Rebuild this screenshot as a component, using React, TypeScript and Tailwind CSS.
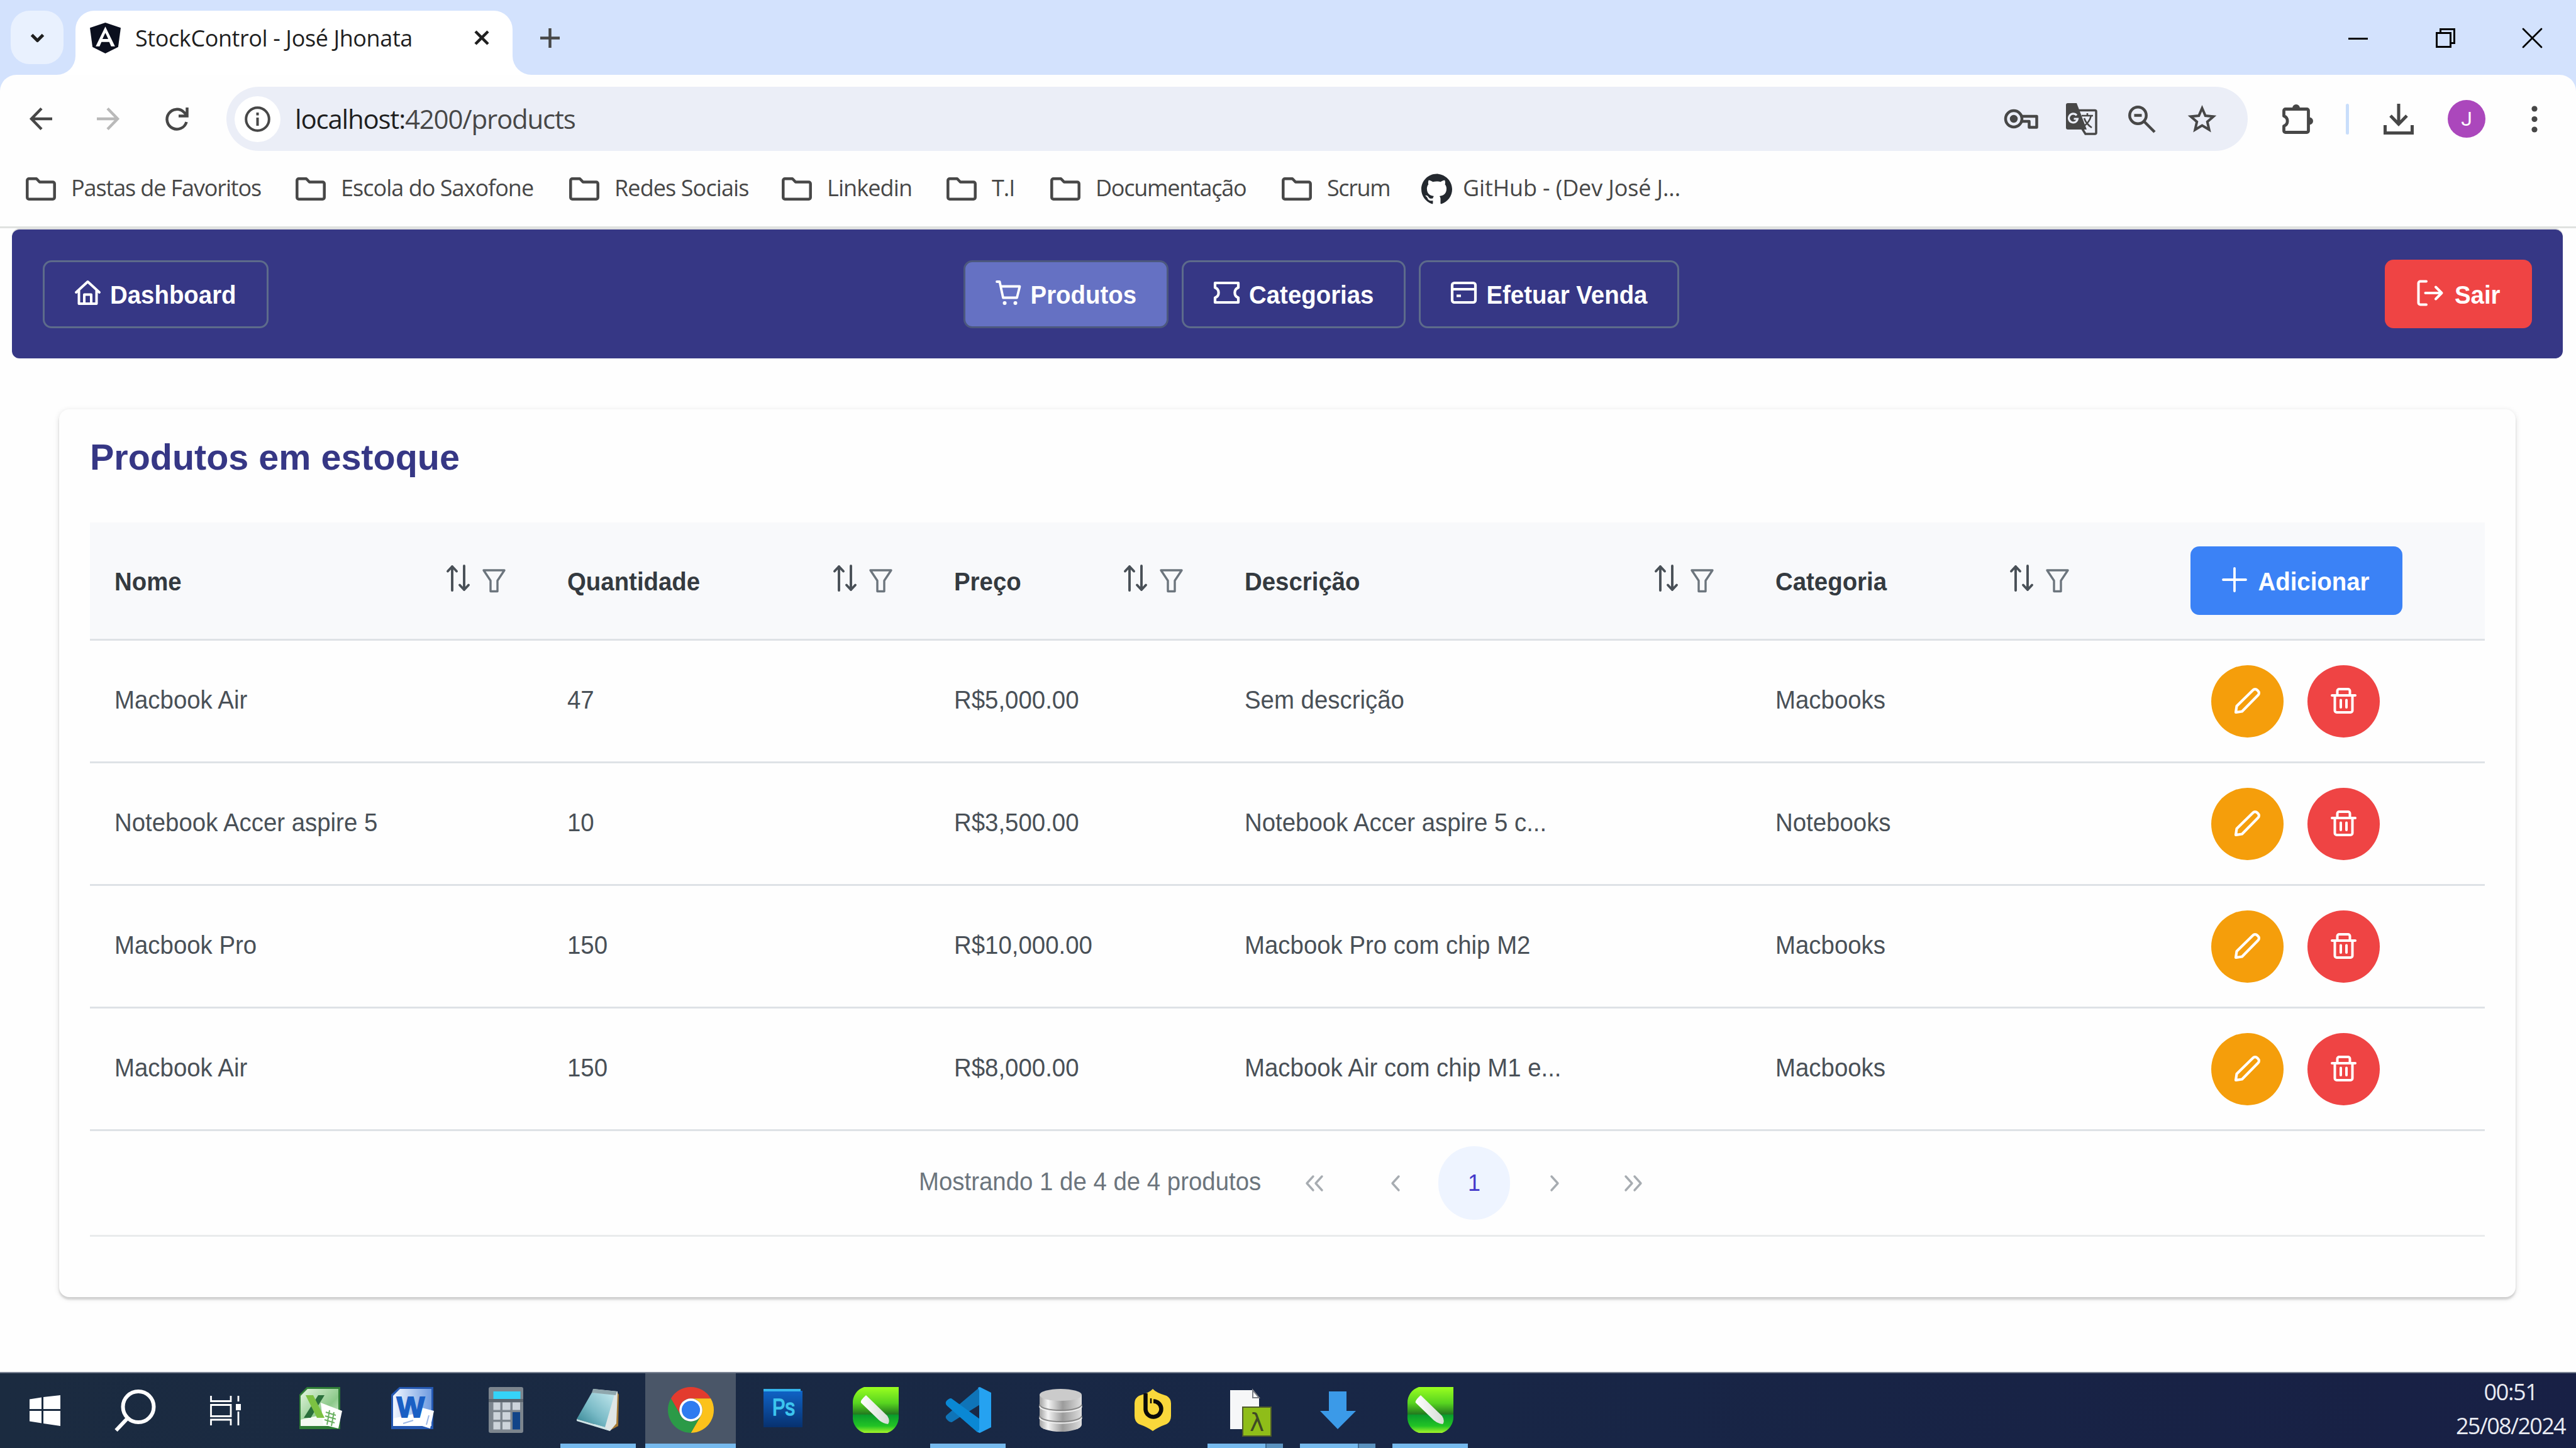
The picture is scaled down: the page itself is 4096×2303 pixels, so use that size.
import type { ReactNode } from 'react';
import { SiGithub } from 'react-icons/si';

type IconProps = { className: string; box: string; width?: number; children: ReactNode };

function Line({ className, box, width = 4, children }: IconProps) {
  return (
    <svg className={'shrink-0 overflow-visible ' + className} viewBox={box} fill="none" stroke="currentColor" strokeWidth={width} strokeLinejoin="round" strokeLinecap="round">
      {children}
    </svg>
  );
}

function Art({ className, box, children }: IconProps) {
  return (
    <svg className={'shrink-0 overflow-visible ' + className} viewBox={box}>
      {children}
    </svg>
  );
}

/* ---------- Browser ---------- */

function TabStrip() {
  return (
    <div className="flex h-[119px] items-start pt-[17px]">
      <div className="ml-[17px] flex h-[85px] w-[84px] items-center justify-center rounded-[30px] bg-[#e9f1fe] text-[#1f1f1f]">
        <Line className="h-[14px] w-[23px]" box="0 0 23 14" width={5}><path d="M2.500 2.500L11.500 11.500L20.500 2.500" strokeLinecap="butt" /></Line>
      </div>
      <div className="relative ml-[19px] flex h-[102px] w-[695px] rounded-t-[30px] bg-white pl-[23px]">
        <svg className="absolute bottom-0 -left-[30px] h-[30px] w-[30px]" viewBox="0 0 30 30"><path d="M30 0V30H0A30 30 0 0 0 30 0Z" fill="#fff" /></svg>
        <svg className="absolute -right-[30px] bottom-0 h-[30px] w-[30px]" viewBox="0 0 30 30"><path d="M0 0V30H30A30 30 0 0 1 0 0Z" fill="#fff" /></svg>
        <div className="flex h-[86px] flex-1 items-center">
          <Art className="h-[49px] w-[49px]" box="0 0 48 48">
            <path d="M24 0L48 8L44 38L24 48L4 38L0 8Z" fill="#0b0f1e" />
            <path fillRule="evenodd" d="M24 6L39 37H33L30 30H18L15 37H9ZM24 16L28.500 25.500H19.500Z" fill="#fff" />
          </Art>
          <span className="ml-[23px] w-[539px] whitespace-nowrap pt-[2px] text-[36px] leading-[48px] tracking-[-0.4px] text-[#1f1f1f]">StockControl - José Jhonata</span>
          <Line className="h-[24px] w-[24px] text-[#1f1f1f]" box="0 0 24 24" width={4.5}><path d="M2 2L22 22M22 2L2 22" strokeLinecap="butt" /></Line>
        </div>
      </div>
      <div className="ml-[44px] flex h-[86px] items-center text-[#474747]">
        <Line className="h-[31px] w-[31px]" box="0 0 31 31" width={4.5}><path d="M15.500 0V31M0 15.500H31" strokeLinecap="butt" /></Line>
      </div>
      <div className="mr-[54px] ml-auto flex h-[86px] items-center text-black">
        <div className="mt-[2px] h-[3px] w-[31px] bg-black" />
        <Line className="ml-[108px] h-[31px] w-[31px]" box="0 0 31 31" width={3}><path strokeLinejoin="miter" d="M1.500 7.500H23.500V29.500H1.500ZM7.500 7V1.500H29.500V23.500H24" /></Line>
        <Line className="ml-[107px] h-[31px] w-[31px]" box="0 0 31 31" width={2.8}><path d="M1 1L30 30M30 1L1 30" /></Line>
      </div>
    </div>
  );
}

function Toolbar() {
  return (
    <div className="flex h-[121px] items-center pt-[19px] text-[#474747]">
      <Line className="ml-[47px] h-[36px] w-[36px]" box="0 0 36 36" width={4.5}><path strokeLinecap="butt" strokeLinejoin="miter" d="M36 18H4M19 1.500L3 18L19 34.500" /></Line>
      <Line className="ml-[71px] h-[36px] w-[36px] text-[#b9b9b9]" box="0 0 36 36" width={4.5}><path strokeLinecap="butt" strokeLinejoin="miter" d="M0 18H32M17 1.500L33 18L17 34.500" /></Line>
      <Line className="ml-[73px] h-[36px] w-[37px]" box="0 0 37 36" width={4.5}><path strokeLinecap="butt" strokeLinejoin="miter" d="M33.500 23A15.800 15.800 0 1 1 29.500 7.500L34 12M34.500 0V13.500H21" /></Line>
      <div className="ml-[60px] flex h-[102px] w-[3214px] items-center rounded-full bg-[#ebeef7] pl-[13px]">
        <div className="flex h-[73px] w-[73px] items-center justify-center rounded-full bg-white">
          <Line className="h-[41px] w-[41px]" box="0 0 41 41" width={4}><circle cx="20.500" cy="20.500" r="18.300" /><path strokeLinecap="butt" d="M20.500 18V31M20.500 10V14.500" /></Line>
        </div>
        <span className="ml-[23px] whitespace-nowrap text-[42px] leading-[60px] tracking-[-1.2px] text-[#474747]"><span className="text-[#1f1f1f]">localhost:</span>4200/products</span>
        <Line className="ml-auto h-[32px] w-[54px]" box="0 0 54 32" width={4.5}>
          <circle cx="15" cy="16" r="13" /><circle cx="15" cy="16" r="4" fill="currentColor" />
          <path d="M27.500 12H51.500V29.500H39.500V20H27.500" />
        </Line>
        <Art className="ml-[44px] h-[51px] w-[50px]" box="0 0 50 51">
          <path d="M3 0H17L33 42H3A3 3 0 0 1 0 39V3A3 3 0 0 1 3 0Z" fill="#474747" />
          <path d="M19.500 11.500H46A2 2 0 0 1 48 13.500V47A2 2 0 0 1 46 49H31L26 41" fill="none" stroke="#474747" strokeWidth="3.500" />
          <path d="M17 19.500A7 7 0 1 0 18.500 25H12.500" fill="none" stroke="#ebeef7" strokeWidth="3.200" />
          <path d="M25 20H43M34 16V20M40 20C38 28 34 33 28 37M29 24C31 30 35 35 41 39" fill="none" stroke="#474747" strokeWidth="2.600" />
        </Art>
        <Line className="ml-[49px] h-[43px] w-[43px]" box="0 0 43 43" width={4.5}><circle cx="15.500" cy="15.500" r="13.200" /><path strokeLinecap="butt" d="M25 25L42 42M9.500 15.500H21.500" /></Line>
        <Line className="mr-[50px] ml-[52px] h-[44px] w-[45px]" box="0 0 45 44" width={4}><path strokeLinejoin="miter" d="M22.500 5L27.700 17L40.500 18.200L30.800 26.700L33.700 39.300L22.500 32.600L11.300 39.300L14.200 26.700L4.500 18.200L17.300 17Z" /></Line>
      </div>
      <Line className="ml-[55px] h-[49px] w-[49px]" box="0 0 49 49" width={4.8}>
        <path d="M5 8.500H39A2.500 2.500 0 0 1 41.500 11V43A2.500 2.500 0 0 1 39 45.500H5A2.500 2.500 0 0 1 2.500 43V35.500A8.500 8.500 0 0 0 2.500 19.500V11A2.500 2.500 0 0 1 5 8.500Z" />
        <path d="M16 7A6 6 0 0 1 28 7ZM43 21.500A6 6 0 0 1 43 33.500Z" fill="currentColor" stroke="none" />
      </Line>
      <div className="ml-[52px] h-[49px] w-[5px] rounded-full bg-[#c9defb]" />
      <Line className="ml-[55px] h-[49px] w-[48px]" box="0 0 48 49" width={5}><path strokeLinecap="butt" strokeLinejoin="miter" d="M24 0V32M11 19L24 32.500L37 19M2.500 34V46.500H45.500V34" /></Line>
      <div className="ml-[54px] flex h-[60px] w-[60px] items-center justify-center rounded-full bg-[#ab47bc] font-[Roboto] text-[32px] leading-[60px] text-white">J</div>
      <Art className="ml-[73px] h-[43px] w-[10px]" box="0 0 10 43"><circle cx="5" cy="5" r="4.600" fill="#474747" /><circle cx="5" cy="21.500" r="4.600" fill="#474747" /><circle cx="5" cy="38" r="4.600" fill="#474747" /></Art>
    </div>
  );
}

const folders = [
  { name: 'Pastas de Favoritos', cls: 'w-[429px] tracking-[-1.12px]' },
  { name: 'Escola do Saxofone', cls: 'w-[435px] tracking-[-0.98px]' },
  { name: 'Redes Sociais', cls: 'w-[338px] tracking-[-0.9px]' },
  { name: 'Linkedin', cls: 'w-[262px] tracking-[-0.9px]' },
  { name: 'T.I', cls: 'w-[165px] tracking-[-1px]' },
  { name: 'Documentação', cls: 'w-[368px] tracking-[-1.25px]' },
  { name: 'Scrum', cls: 'w-[222px] tracking-[-1.4px]' },
];

function Bookmarks() {
  return (
    <div className="flex h-[120px] items-center pl-[41px] text-[#474747]">
      {folders.map((f) => (
        <div key={f.name} className={'flex shrink-0 items-center whitespace-nowrap text-[36px] leading-[48px] ' + f.cls}>
          <Line className="h-[37px] w-[48px]" box="0 0 48 37" width={4.5}><path d="M5 2.300H17L22 7.500H43A2.700 2.700 0 0 1 45.700 10.200V32A2.700 2.700 0 0 1 43 34.700H5A2.700 2.700 0 0 1 2.300 32V5A2.700 2.700 0 0 1 5 2.300Z" /></Line>
          <span className="ml-[24px] pb-[3px]">{f.name}</span>
        </div>
      ))}
      <SiGithub className="h-[49px] w-[49px] shrink-0 text-[#24292f]" />
      <span className="ml-[17px] whitespace-nowrap pb-[3px] text-[36px] leading-[48px] tracking-[-0.15px]">GitHub - (Dev José J...</span>
    </div>
  );
}

/* ---------- Application ---------- */

function NavButton({ icon, label, active }: { icon: ReactNode; label: string; active?: boolean }) {
  return (
    <div className={'flex h-[108px] items-center gap-[15px] rounded-[14px] border-[3px] px-[48px] ' + (active ? 'border-[#4c587e] bg-[#6571c3]' : 'border-[#5d6b8b]')}>
      {icon}
      <span className="scale-y-107 pt-[2px]">{label}</span>
    </div>
  );
}

function Nav() {
  return (
    <div className="mr-[21px] ml-[19px] mt-[2px] flex h-[205px] items-center rounded-[12px] bg-[#363785] pr-[49px] pl-[49px] text-[38.4px] leading-[48px] font-bold whitespace-nowrap text-white shadow-[0_-2px_0_#dfe0e0]">
      <NavButton label="Dashboard" icon={
        <Line className="-mt-[5px] h-[41px] w-[41px]" box="0 0 41 41" width={4}><path d="M2 20L20.500 3L39 20M6.500 17V38H34.500V17M15 38V23.500H26V38" /></Line>
      } />
      <div className="ml-[1105px] flex gap-[21px]">
        <NavButton active label="Produtos" icon={
          <Line className="-mt-[3px] h-[41px] w-[41px]" box="0 0 41 41" width={3.8}><path d="M2 2H6.500L12 27.500H34L38.500 9.500H8.500" /><circle cx="14.500" cy="36" r="3" fill="currentColor" stroke="none" /><circle cx="31.500" cy="36" r="3" fill="currentColor" stroke="none" /></Line>
        } />
        <NavButton label="Categorias" icon={
          <Line className="-mt-[5px] h-[35px] w-[41px]" box="0 0 41 35" width={4.2}><path d="M2 2H39V9.500A8.500 8.500 0 0 0 39 25.500V33H2V25.500A8.500 8.500 0 0 0 2 9.500Z" /></Line>
        } />
        <NavButton label="Efetuar Venda" icon={
          <Line className="-mt-[5px] h-[35px] w-[41px]" box="0 0 41 35" width={4.2}><rect x="2" y="2" width="37" height="31" rx="3.500" /><path strokeLinecap="butt" d="M2 12H39M9 22.500H16" /></Line>
        } />
      </div>
      <div className="ml-auto flex h-[109px] w-[234px] items-center rounded-[14px] bg-[#ef4444] pl-[51px]">
        <Line className="-mt-[4px] h-[42px] w-[42px]" box="0 0 42 42" width={4}><path d="M15 2.500H5.500A3 3 0 0 0 2.500 5.500V36.500A3 3 0 0 0 5.500 39.500H15M13.500 21H39.500M30 11.500L39.500 21L30 30.500" /></Line>
        <span className="ml-[18px] scale-y-107 pt-[2px]">Sair</span>
      </div>
    </div>
  );
}

const grid = 'grid grid-cols-[720px_615px_462px_844px_565px_602px]';
const columns = ['Nome', 'Quantidade', 'Preço', 'Descrição', 'Categoria'];

const products = [
  ['Macbook Air', '47', 'R$5,000.00', 'Sem descrição', 'Macbooks'],
  ['Notebook Accer aspire 5', '10', 'R$3,500.00', 'Notebook Accer aspire 5 c...', 'Notebooks'],
  ['Macbook Pro', '150', 'R$10,000.00', 'Macbook Pro com chip M2', 'Macbooks'],
  ['Macbook Air', '150', 'R$8,000.00', 'Macbook Air com chip M1 e...', 'Macbooks'],
];

function Products() {
  return (
    <div className="mt-[81px] ml-[94px] h-[1412px] w-[3906px] rounded-[16px] bg-[#fefefe] px-[49px] pt-[46px] text-[38.4px] leading-[48px] whitespace-nowrap shadow-[0_4px_3px_0_rgba(0,0,0,0.12),0_2px_10px_0_rgba(0,0,0,0.13)]">
      <h1 className="text-[57.5px] leading-[60px] font-bold text-[#363785]">Produtos em estoque</h1>
      <div className={grid + ' mt-[74px] h-[188px] border-b-[3px] border-[#dee2e6] bg-[#f8f9fb] font-bold text-[#343a40]'}>
        {columns.map((c) => (
          <div key={c} className="flex items-center pr-[59px] pl-[39px]">
            <span className="scale-y-107 pt-[2px]">{c}</span>
            <Line className="mb-[9px] ml-auto h-[41px] w-[37px] text-[#495057]" box="0 0 37 41" width={3.9}><path d="M9 40V2M2 9.500L9 2L16 9.500M28 1V39M21 31.500L28 39L35 31.500" /></Line>
            <Line className="ml-[20px] h-[37px] w-[37px] text-[#6c757d]" box="0 0 37 37" width={3.4}><path d="M2 2H35L24 18.500V35.500H13V18.500Z" /></Line>
          </div>
        ))}
        <div className="flex items-center justify-center">
          <div className="ml-[2px] flex h-[109px] w-[337px] items-center rounded-[14px] bg-[#3b82f6] pl-[50px] text-white">
            <Line className="-mt-[3px] h-[40px] w-[40px]" box="0 0 40 40" width={3.8}><path d="M20 2V38M2 20H38" /></Line>
            <span className="ml-[18px] scale-y-107 pt-[2px]">Adicionar</span>
          </div>
        </div>
      </div>
      {products.map((p, i) => (
        <div key={i} className={grid + ' h-[195px] border-b-[3px] border-[#dee2e6] text-[#495057]'}>
          {p.map((v, j) => <div key={j} className="flex items-center pl-[39px]"><span className="scale-y-107 pb-[4px]">{v}</span></div>)}
          <div className="flex items-center justify-center gap-[38px] text-white">
            <div className="flex h-[115px] w-[115px] items-center justify-center rounded-full bg-[#f59e0b]">
              <Line className="-mt-[2px] h-[41px] w-[41px]" box="0 0 41 41" width={4.2}><path d="M2 39L3.500 29L29.500 3.500A4.500 4.500 0 0 1 36 3.500L37.500 5A4.500 4.500 0 0 1 37.500 11.500L12 37.500Z" /></Line>
            </div>
            <div className="flex h-[115px] w-[115px] items-center justify-center rounded-full bg-[#ef4444]">
              <Line className="-mt-[2px] h-[41px] w-[41px]" box="0 0 41 41" width={4}><path d="M2 12H39M6.500 12V36A3 3 0 0 0 9.500 39H31.500A3 3 0 0 0 34.500 36V12M10.500 12V5A3 3 0 0 1 13.500 2H27.500A3 3 0 0 1 30.500 5V12M16 19.500V31M25 19.500V31" /></Line>
            </div>
          </div>
        </div>
      ))}
      <div className="flex h-[168px] items-center border-b-[3px] border-[#e9ebec] pl-[1318px] text-[#a7acb1]">
        <span className="-mt-[5px] w-[614px] scale-y-107 text-[#6c757d]">Mostrando 1 de 4 de 4 produtos</span>
        <Line className="h-[26px] w-[30px]" box="0 0 30 26" width={3.4}><path d="M13 2L3 13L13 24M27 2L17 13L27 24" /></Line>
        <Line className="ml-[106px] h-[26px] w-[17px]" box="0 0 17 26" width={3.4}><path d="M13 2L3 13L13 24" /></Line>
        <div className="ml-[59px] h-[117px] w-[114px] rounded-full bg-[#eef4ff] text-center text-[36px] leading-[117px] text-[#4338ca]">1</div>
        <Line className="ml-[62px] h-[26px] w-[17px]" box="0 0 17 26" width={3.4}><path d="M4 2L14 13L4 24" /></Line>
        <Line className="ml-[102px] h-[26px] w-[30px]" box="0 0 30 26" width={3.4}><path d="M3 2L13 13L3 24M17 2L27 13L17 24" /></Line>
      </div>
    </div>
  );
}

/* ---------- Taskbar ---------- */

const B = '0 0 73 73';
const S = 'h-[73px] w-[73px]';

function Excel() {
  return (
    <Art className={S} box={B}>
      <defs><linearGradient id="xl" x1="0" y1="0" x2="1" y2="1"><stop offset="0" stopColor="#e4f5df" /><stop offset="0.6" stopColor="#8cc98a" /><stop offset="1" stopColor="#e9f5e6" /></linearGradient></defs>
      <path d="M14 0H67V67H2V12Z" fill="#2f7d36" /><path d="M15 3H64V62H4V14Z" fill="url(#xl)" />
      <path d="M4 52L30 46L64 40V62H4Z" fill="#f4faf2" />
      <path d="M36 25L70 38L64 66L40 60Z" fill="#fff" /><path d="M44 40L60 45M43 46L60 51M42 52L58 57M50 37L46 60M57 40L53 62" stroke="#69b061" strokeWidth="2" />
      <path d="M32 13H42L20 49H9Z" fill="#2a6f3b" /><path d="M12 13H24L42 49H30Z" fill="#7cc142" />
    </Art>
  );
}
function Word() {
  return (
    <Art className={S} box={B}>
      <defs><linearGradient id="wd" x1="0" y1="0" x2="1" y2="0"><stop offset="0" stopColor="#f2f7ff" /><stop offset="1" stopColor="#6f9be0" /></linearGradient></defs>
      <path d="M14 0H68V67H1V12Z" fill="#2457b0" /><path d="M15 3H65V62H4V14Z" fill="url(#wd)" /><path d="M4 50L50 40L65 46V62H4Z" fill="#fff" />
      <path d="M50 33L69 38L63 66L44 60Z" fill="#fff" /><path d="M20 58L36 53M61 45L57 60" stroke="#9db8e6" strokeWidth="2" />
      <text x="32" y="48" textAnchor="middle" fontFamily="Liberation Sans" fontWeight="bold" fontSize="47" fill="#1a5fc4" stroke="#1a5fc4" strokeWidth="2">W</text>
    </Art>
  );
}
function Calculator() {
  return (
    <Art className={S} box={B}>
      <rect x="9" y="0" width="55" height="73" rx="3" fill="#7c858e" /><rect x="9" y="19" width="55" height="5" fill="#5d666f" />
      <rect x="16.500" y="7" width="43" height="12" fill="#35d3f8" />
      <path d="M16.500 24.500h11v12h-11zM31 24.500h12.500v12H31zM47 24.500h12v12H47zM16.500 40h11v12h-11zM31 40h12.500v12H31zM16.500 55.500h11v12h-11zM31 55.500h12.500v12H31z" fill="#cdd4db" />
      <path d="M47 40h12v27.500H47z" fill="#114488" />
    </Art>
  );
}
function Notepad() {
  return (
    <Art className={S} box={B}>
      <defs><linearGradient id="np" x1="0" y1="1" x2="1" y2="0"><stop offset="0" stopColor="#2c7f8e" /><stop offset="0.45" stopColor="#79bac6" /><stop offset="1" stopColor="#c3e8ee" /></linearGradient></defs>
      <path d="M66 8L69 12L68 62L57 68Z" fill="#a47a35" /><path d="M28 3L67 7L65 58L55 70L30 62Z" fill="#dfe6e6" />
      <path d="M26 9L62 12L47 64L2 51Z" fill="url(#np)" /><path d="M28 3L66 7L64 13L26 9Z" fill="#8fa7ad" /><path d="M2 51L47 64L55 70L2 54Z" fill="#cfe4e6" />
    </Art>
  );
}
function Chrome() {
  return (
    <Art className={S} box="0 0 48 48">
      <path d="M24 12H44.800A24 24 0 0 0 3.200 12L13.600 30A12 12 0 0 1 24 12Z" fill="#e33b2e" />
      <path d="M34.400 30L24 48A24 24 0 0 0 44.800 12H24A12 12 0 0 1 34.400 30Z" fill="#fcc21b" />
      <path d="M13.600 30L3.200 12A24 24 0 0 0 24 48L34.400 30A12 12 0 0 1 13.600 30Z" fill="#2b9a47" />
      <circle cx="24" cy="24" r="12" fill="#fff" /><circle cx="24" cy="24" r="9.600" fill="#2f7bf0" />
    </Art>
  );
}
function Photoshop() {
  return (
    <Art className={S} box={B}>
      <defs><linearGradient id="ps" x1="0" y1="0" x2="0" y2="1"><stop offset="0" stopColor="#0f63c6" /><stop offset="1" stopColor="#07316f" /></linearGradient></defs>
      <rect x="5" y="6" width="62" height="58" fill="url(#ps)" /><rect x="5" y="3" width="59" height="4" fill="#35b5ec" />
      <text x="37" y="45" textAnchor="middle" fontFamily="Liberation Sans" fontSize="37" textLength="36" lengthAdjust="spacingAndGlyphs" fill="#3cc5ee" stroke="#3cc5ee" strokeWidth="1.600">Ps</text>
    </Art>
  );
}
function Camtasia() {
  return (
    <Art className={S} box={B}>
      <defs>
        <linearGradient id="ct" x1="0" y1="0" x2="0" y2="1"><stop offset="0" stopColor="#9aff1f" /><stop offset="0.35" stopColor="#58d420" /><stop offset="0.590" stopColor="#237a1e" /><stop offset="0.610" stopColor="#0a9c2c" /><stop offset="0.850" stopColor="#22c425" /><stop offset="1" stopColor="#a6f52a" /></linearGradient>
        <linearGradient id="cp" x1="0" y1="0" x2="1" y2="0"><stop offset="0" stopColor="#fff" /><stop offset="1" stopColor="#d5dcd5" /></linearGradient>
      </defs>
      <path d="M18 0H73V46A27 27 0 0 1 55 73H18A26 26 0 0 1 0 46V26A26 26 0 0 1 18 0Z" fill="url(#ct)" />
      <path d="M21 13L55 46Q60 54 56 59Q48 58 42 53L13 25Q11 22 21 13Z" fill="url(#cp)" />
    </Art>
  );
}
function VsCode() {
  return (
    <Art className={S} box={B}>
      <path d="M55 0V28L12 55Q8 58 2 51Q-1 47 3 44Z" fill="#0f74b8" />
      <path d="M55 73V51L11 19Q8 16 2 22Q-1 26 3 30L50 71Z" fill="#0a88d4" />
      <path d="M52 1L55 0L73 9V64L55 73L50 71Q54 71 54 66V6Z" fill="#25a2f1" />
    </Art>
  );
}
function Database() {
  return (
    <Art className={S} box={B}>
      <defs><linearGradient id="db" x1="0" y1="0" x2="1" y2="0"><stop offset="0" stopColor="#a2a2a2" /><stop offset="0.2" stopColor="#f4f4f4" /><stop offset="0.550" stopColor="#9b9b9b" /><stop offset="1" stopColor="#dedede" /></linearGradient></defs>
      <path d="M3 12V60A33.500 11 0 0 0 70 60V12Z" fill="url(#db)" /><ellipse cx="36.500" cy="12.500" rx="33.500" ry="9.500" fill="#cbcbcb" />
      <path d="M3 28A33.500 9 0 0 0 70 28M3 46A33.500 9 0 0 0 70 46" fill="none" stroke="#858585" strokeWidth="2" /><path d="M3 30.500A33.500 9 0 0 0 70 30.500M3 48.500A33.500 9 0 0 0 70 48.500" fill="none" stroke="#efefef" strokeWidth="2" />
    </Art>
  );
}
function Beekeeper() {
  return (
    <Art className={S} box={B}>
      <path d="M36 3Q41 9 58 14Q65 18 65 26V46Q65 55 58 59Q44 64 36 70Q28 64 14 59Q7 55 7 46V26Q7 18 14 14Q31 9 36 3Z" fill="#fad83b" />
      <path d="M24.500 10V36A12.500 12.500 0 1 0 37 22.500" fill="none" stroke="#0b0b0b" strokeWidth="6.500" /><path d="M33 18V26" stroke="#0b0b0b" strokeWidth="2.500" />
    </Art>
  );
}
function LambdaFile() {
  return (
    <Art className={S} box={B}>
      <path d="M12 5H49L58 17V67H12Z" fill="#f6f7f8" /><path d="M48 5V17H58Z" fill="#fff" stroke="#7b7f86" strokeWidth="2" />
      <rect x="32" y="32" width="45" height="46" fill="#8fbd19" stroke="#4e5a2b" strokeWidth="2" />
      <text x="54.500" y="70" textAnchor="middle" fontFamily="DejaVu Sans" fontSize="39" fill="#3f4a25">λ</text>
    </Art>
  );
}
function Download() {
  return <Art className={S} box={B}><path d="M22 7H50V38H65L36 67L8 38H22Z" fill="#3b9ae8" /></Art>;
}

const apps: { icon: ReactNode; bar?: 'open' | 'stack' | 'active' }[] = [
  { icon: <Excel /> }, { icon: <Word /> }, { icon: <Calculator /> }, { icon: <Notepad />, bar: 'open' }, { icon: <Chrome />, bar: 'active' },
  { icon: <Photoshop /> }, { icon: <Camtasia /> }, { icon: <VsCode />, bar: 'open' }, { icon: <Database /> }, { icon: <Beekeeper /> },
  { icon: <LambdaFile />, bar: 'stack' }, { icon: <Download />, bar: 'stack' }, { icon: <Camtasia />, bar: 'open' },
];

function Taskbar() {
  return (
    <div className="mt-auto flex h-[121px] shrink-0 border-t-2 border-[#7a8393] bg-linear-to-r from-[#1b2b40] via-[#182746] to-[#182045]">
      <div className="flex w-[142px] items-center justify-center">
        <Art className="h-[49px] w-[49px]" box="0 0 49 49"><path d="M0 6.500L19 3.500V22H0ZM22 3L49 0V22H22ZM0 25H19V44.500L0 41.500ZM22 25H49V49L22 45Z" fill="#fff" /></Art>
      </div>
      <div className="flex w-[144px] items-center justify-center">
        <Line className="h-[68px] w-[66px] text-white" box="0 0 66 68" width={6}><circle cx="39" cy="27.500" r="24.500" /><path d="M21.500 46L3.500 65" strokeLinecap="butt" /></Line>
      </div>
      <div className="flex w-[144px] items-center justify-center">
        <Line className="h-[47px] w-[49px] text-white" box="0 0 49 47" width={2.8}><path strokeLinecap="butt" strokeLinejoin="miter" d="M1.500 0V8.500H33V0M1.500 14.500H33V32.500H1.500ZM1.500 47V38H33V47M45 0V9M45 25V47" /><path d="M41 13H49V23H41Z" fill="currentColor" stroke="none" /></Line>
      </div>
      <div className="ml-[8px] flex gap-[3px]">
        {apps.map((a, i) => (
          <div key={i} className={'flex w-[144px] flex-col items-center ' + (a.bar === 'active' ? 'bg-[#4a5668]' : '')}>
            <div className="flex flex-1 items-center pt-[5px]">{a.icon}</div>
            {a.bar === 'active' && <div className="h-[7px] w-full bg-[#76b9ed]" />}
            {a.bar === 'open' && <div className="h-[7px] w-[120px] bg-[#76b9ed]" />}
            {a.bar === 'stack' && <div className="flex h-[7px] w-[120px] bg-[#5a91be]"><div className="w-[94px] border-r-2 border-[#3d6a93] bg-[#76b9ed]" /></div>}
            {!a.bar && <div className="h-[7px]" />}
          </div>
        ))}
      </div>
      <div className="mr-[17px] ml-auto flex flex-col items-center pt-[3px] font-['Open_Sans',sans-serif] text-[36px] leading-[54px] text-[#e9ebf2]">
        <span className="tracking-[-1.4px]">00:51</span>
        <span className="tracking-[-1.7px]">25/08/2024</span>
      </div>
    </div>
  );
}

export default function App() {
  return (
    <div className="flex h-[2303px] w-[4096px] flex-col overflow-hidden bg-[#fefefe] font-['Liberation_Sans',sans-serif]">
      <div className="bg-[#d3e2fd] font-['Open_Sans',sans-serif]">
        <TabStrip />
        <div className="rounded-t-[26px] border-b-[3px] border-[#e0e2e0] bg-[#fefefe]">
          <Toolbar />
          <Bookmarks />
        </div>
      </div>
      <Nav />
      <Products />
      <Taskbar />
    </div>
  );
}
